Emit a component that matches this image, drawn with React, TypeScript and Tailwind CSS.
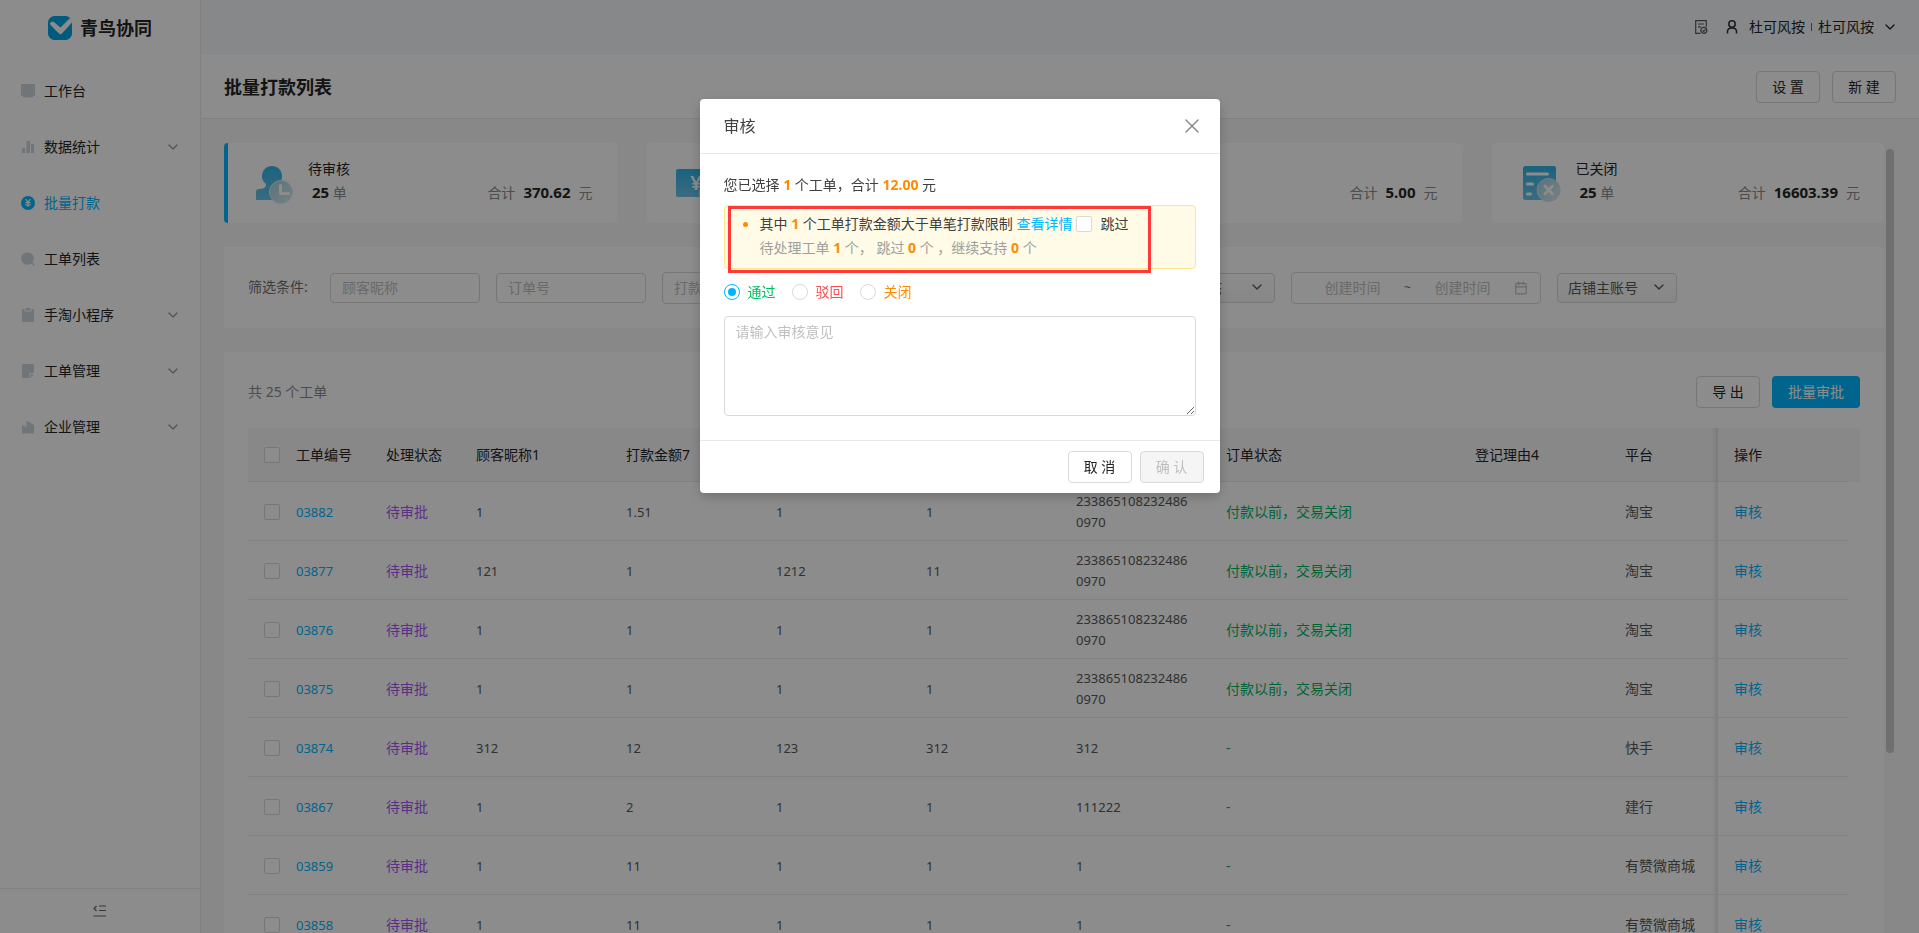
import React, { useState } from 'react';
import { Calendar, ChevronDown, X } from 'lucide-react';

const menu = [
  { name: '工作台', icon: 'desk', arrow: false },
  { name: '数据统计', icon: 'chart', arrow: true },
  { name: '批量打款', icon: 'pay', arrow: false },
  { name: '工单列表', icon: 'search', arrow: false },
  { name: '手淘小程序', icon: 'clip', arrow: true },
  { name: '工单管理', icon: 'note', arrow: true },
  { name: '企业管理', icon: 'company', arrow: true },
];

const stats = [
  { name: '待审核', icon: 'user', count: 25, total: '370.62' },
  { name: '待打款', icon: 'money', count: 3, total: '12.00' },
  { name: '已打款', icon: 'money', count: 2, total: '5.00' },
  { name: '已关闭', icon: 'closed', count: 25, total: '16603.39' },
];

const LONG_NO = '2338651082324860970';

const rows = [
  { id: '03882', cells: ['1', '1.51', '1', '1', LONG_NO], state: '付款以前，交易关闭', platform: '淘宝' },
  { id: '03877', cells: ['121', '1', '1212', '11', LONG_NO], state: '付款以前，交易关闭', platform: '淘宝' },
  { id: '03876', cells: ['1', '1', '1', '1', LONG_NO], state: '付款以前，交易关闭', platform: '淘宝' },
  { id: '03875', cells: ['1', '1', '1', '1', LONG_NO], state: '付款以前，交易关闭', platform: '淘宝' },
  { id: '03874', cells: ['312', '12', '123', '312', '312'], state: '-', platform: '快手' },
  { id: '03867', cells: ['1', '2', '1', '1', '111222'], state: '-', platform: '建行' },
  { id: '03859', cells: ['1', '11', '1', '1', '1'], state: '-', platform: '有赞微商城' },
  { id: '03858', cells: ['1', '11', '1', '1', '1'], state: '-', platform: '有赞微商城' },
];

const columns = ['工单编号', '处理状态', '顾客昵称1', '打款金额7', '支付宝姓名', '支付宝账号', '订单号', '订单状态', '登记理由4', '平台'];

const results = [
  { value: 'pass', name: '通过', color: 'text-[#00c060]' },
  { value: 'reject', name: '驳回', color: 'text-[#ff4d4f]' },
  { value: 'close', name: '关闭', color: 'text-[#ff8c00]' },
];

const btn = 'h-8 w-16 rounded border border-[#d9d9d9] bg-white text-[#262626] cursor-pointer';
const box = 'size-4 shrink-0 appearance-none rounded-xs border border-[#d9d9d9] bg-white block';
const field = 'rounded border border-[#d9d9d9] bg-white placeholder:text-[#bfbfbf] outline-none';
const fixedCol =
  'relative before:absolute before:inset-y-0 before:-left-1.5 before:w-1.5 before:bg-linear-to-l before:from-black/10 before:to-transparent';

function MenuIcon({ name }: { name: string }) {
  return (
    <svg width="14" height="14" viewBox="0 0 14 14" fill="#cbd5db">
      {name === 'desk' && (
        <>
          <rect width="14" height="12" rx="1" />
          <rect x="2" y="12" width="10" height="1.5" />
        </>
      )}
      {name === 'chart' && <path d="M1 8h3v5H1zM5.500 1h3.500v12H5.500zM10 4h3v9h-3z" />}
      {name === 'pay' && (
        <>
          <circle cx="7" cy="7" r="7" fill="#00b7ff" />
          <path d="M4.500 3L7 6.200 9.500 3M7 6v5M4.300 6.700h5.400M4.300 8.900h5.400" stroke="#fff" strokeWidth="1.200" fill="none" />
        </>
      )}
      {name === 'search' && (
        <>
          <circle cx="6.500" cy="6.500" r="6.300" />
          <path d="M10.500 10.500l3 3" stroke="#cbd5db" strokeWidth="1.500" />
        </>
      )}
      {name === 'clip' && <path d="M1 1h2.500v2.500h7V1H13v13H1zM4.500 0h5v2.500h-5z" />}
      {name === 'note' && <path d="M1 0h12v9H8.500v5H1zM9.500 10.200H13L9.500 13.700z" />}
      {name === 'company' && <path d="M1 5L5.500 7V.5L13 5v8.500H1z" />}
    </svg>
  );
}

function StatIcon({ name }: { name: string }) {
  return (
    <svg width="44" height="44" viewBox="0 0 44 44" className="shrink-0">
      <defs>
        <linearGradient id={`deep-${name}`} x1="0" y1="0" x2="0" y2="1">
          <stop offset="0" stopColor="#2db5e8" />
          <stop offset="1" stopColor="#6bc4ea" />
        </linearGradient>
        <linearGradient id={`soft-${name}`} x1="0" y1="0" x2="1" y2="1">
          <stop offset="0" stopColor="#9fd0e0" />
          <stop offset="1" stopColor="#dcecf0" />
        </linearGradient>
      </defs>
      {name === 'user' && (
        <>
          <path
            d="M20 5a10 10 0 0 1 6 18v4l4 1v11H4V31q0-3 3-3l4-.5q3-1 3-4.500A10 10 0 0 1 20 5z"
            fill="url(#deep-user)"
          />
          <circle cx="29" cy="31" r="11.500" fill="url(#soft-user)" stroke="#d6edf0" />
          <path d="M28.500 24.500v8h8" stroke="#fff" strokeWidth="3" strokeLinecap="round" strokeLinejoin="round" fill="none" />
        </>
      )}
      {name === 'money' && (
        <>
          <rect x="1" y="8" width="38" height="28" rx="2" fill="url(#deep-money)" />
          <text x="21" y="29" fontSize="20" fontWeight="600" fill="#fff" textAnchor="middle">¥</text>
          <circle cx="33" cy="32" r="9" fill="url(#soft-money)" stroke="#d6edf0" />
        </>
      )}
      {name === 'closed' && (
        <>
          <rect x="3" y="5" width="33" height="34" rx="2.500" fill="url(#deep-closed)" />
          <path d="M7.500 13h20M7.500 23h5M7.500 33h3" stroke="#fff" strokeWidth="3" strokeLinecap="round" />
          <circle cx="28.500" cy="29" r="11.500" fill="url(#soft-closed)" stroke="#c5e6f2" />
          <path d="M25 25l7.500 8M32.500 25L25 33" stroke="#fff" strokeWidth="3" strokeLinecap="round" />
        </>
      )}
    </svg>
  );
}

function Sidebar() {
  return (
    <aside className="relative z-10 flex w-50 shrink-0 flex-col bg-white shadow-[1px_0_0_#ebebeb]">
      <div className="mb-2 flex h-[55px] items-center gap-2 pl-12">
        <svg width="24" height="24" viewBox="0 0 24 24">
          <rect width="24" height="24" rx="6.500" fill="#00a6e6" />
          <path d="M2.500 6.500q2-1.500 4 0l6 5L22 2q2.500 1.500 2 4.500L14 17.500q-1.500 1.500-3 0L3 9.500Q1.500 8 2.500 6.500z" fill="#fff" />
        </svg>
        <span className="text-lg font-bold text-[#262626]">青鸟协同</span>
      </div>
      <nav className="flex-1">
        {menu.map((item) => (
          <a
            key={item.name}
            href="#"
            onClick={(e) => e.preventDefault()}
            className={
              'flex h-14 items-center gap-[9px] pr-[19px] pl-[21px] ' +
              (item.icon === 'pay' ? 'text-[#00b7ff]' : 'text-[#262626]')
            }
          >
            <MenuIcon name={item.icon} />
            <span className="flex-1">{item.name}</span>
            {item.arrow && <ChevronDown className="size-4 text-[#999]" />}
          </a>
        ))}
      </nav>
      <button aria-label="收起菜单" className="flex h-[45px] items-center justify-center border-t border-[#ebebeb] text-[#666]">
        <svg width="14" height="12" viewBox="0 0 14 12" fill="none" stroke="currentColor" strokeWidth="1.200">
          <path d="M6 1h7M6 5.500h7M.5 11H13M3.500 1L1 3.500 3.500 6" />
        </svg>
      </button>
    </aside>
  );
}

function TopBar() {
  return (
    <div className="flex h-[55px] shrink-0 items-center justify-end bg-[#f5f7fa] pr-[21px] pb-0.5 text-[#262626]">
      <svg width="13" height="14" viewBox="0 0 13 14" fill="none" stroke="#595959" strokeWidth="1.200">
        <path d="M5.500 13.300H.7V.7h10.600v6M3 4h6M3 6.800h3" />
        <circle cx="8.800" cy="10.300" r="3" />
        <path d="M7.500 10.500l1 1 2-2.200" />
      </svg>
      <svg width="12" height="14" viewBox="0 0 12 14" fill="none" stroke="#333" strokeWidth="1.500" className="ml-[18px]">
        <circle cx="6" cy="4" r="3.200" />
        <path d="M1.500 13.500v-2Q1.500 8 6 8t4.500 3.500v2" />
      </svg>
      <span className="ml-[11px]">杜可风按</span>
      <span className="mx-1.5 h-2 w-px bg-[#666]" />
      <span>杜可风按</span>
      <ChevronDown className="ml-2 size-4" />
    </div>
  );
}

function StatCard({ stat, active }: { stat: (typeof stats)[number]; active: boolean }) {
  return (
    <div className="relative flex h-20 flex-1 items-center gap-3 overflow-hidden rounded bg-white pr-6 pl-7">
      {active && <span className="absolute inset-y-0 left-0 w-1 bg-[#00b7ff]" />}
      <StatIcon name={stat.icon} />
      <div className="flex-1 pb-1.5">
        <p className="leading-6 text-[#262626]">{stat.name}</p>
        <div className="flex justify-between leading-[22px] text-[#8c8c8c]">
          <p className="pl-1">
            <b className="text-[15px] text-[#262626]">{stat.count}</b> 单
          </p>
          <p>
            合计<b className="mx-2 text-[15px] text-[#262626]">{stat.total}</b>元
          </p>
        </div>
      </div>
    </div>
  );
}

function Select({ label, className }: { label: string; className: string }) {
  return (
    <div className={'relative ' + className}>
      <select
        aria-label={label}
        className="h-[30px] w-full appearance-none rounded border border-[#d9d9d9] bg-linear-to-b from-white to-[#f5f5f5] px-[10px] text-[#595959] outline-none"
      >
        <option>{label}</option>
      </select>
      <ChevronDown className="pointer-events-none absolute top-1.5 right-[10px] size-4 text-[#595959]" />
    </div>
  );
}

function Filters() {
  return (
    <form className="mt-6 flex h-[81px] items-center gap-4 bg-white px-6">
      <span className="w-[66px] pb-0.5 text-[#737373]">筛选条件:</span>
      <input aria-label="顾客昵称" placeholder="顾客昵称" className={field + ' h-[30px] w-[150px] px-[11px]'} />
      <input aria-label="订单号" placeholder="订单号" className={field + ' h-[30px] w-[150px] px-[11px]'} />
      <input aria-label="打款金额" placeholder="打款金额" className={field + ' h-8 w-[250px] px-[11px]'} />
      <input aria-label="登记理由" placeholder="登记理由" className={field + ' h-[30px] w-[211px] px-[11px]'} />
      <Select label="订单状态" className="w-[120px]" />
      <div className="flex h-8 w-[250px] items-center rounded border border-[#d9d9d9] bg-white pr-3 pl-[9px] text-[#bfbfbf]">
        <input aria-label="开始时间" placeholder="创建时间" className="w-0 flex-1 text-center outline-none placeholder:text-[#bfbfbf]" />
        <span className="text-xs text-[#737373]">~</span>
        <input aria-label="结束时间" placeholder="创建时间" className="w-0 flex-1 text-center outline-none placeholder:text-[#bfbfbf]" />
        <Calendar className="size-[14px]" />
      </div>
      <Select label="店铺主账号" className="w-[120px]" />
    </form>
  );
}

function OrderTable() {
  return (
    <table className="mt-5 w-full table-fixed border-separate border-spacing-0 text-left">
      <colgroup>
        <col className="w-8" />
        <col className="w-[90px]" />
        <col className="w-[90px]" />
        <col className="w-[150px]" />
        <col className="w-[150px]" />
        <col className="w-[150px]" />
        <col className="w-[150px]" />
        <col className="w-[150px]" />
        <col />
        <col className="w-[150px]" />
        <col className="w-[109px]" />
        <col className="w-[130px]" />
        <col className="w-3" />
      </colgroup>
      <thead>
        <tr className="h-[54px] bg-[#f7f7f7] text-[#262626] [&>th]:font-normal">
          <th className="border-b border-[#e8e8e8] pl-4">
            <input type="checkbox" aria-label="全选" className={box} />
          </th>
          {columns.map((c) => (
            <th key={c} className="border-b border-[#e8e8e8] px-4">{c}</th>
          ))}
          <th className={'border-b border-[#e8e8e8] px-4 ' + fixedCol}>操作</th>
          <th />
        </tr>
      </thead>
      <tbody>
        {rows.map((r) => (
          <tr key={r.id} className="h-[59px] text-[#595959] [&>td]:pt-[9px] [&>td]:pb-[7px]">
            <td className="border-b border-[#ebebeb] pl-4">
              <input type="checkbox" aria-label={r.id} className={box} />
            </td>
            <td className="border-b border-[#ebebeb] px-4 text-[13px]">
              <a href="#" className="text-[#00b7ff]">{r.id}</a>
            </td>
            <td className="border-b border-[#ebebeb] px-4 text-[#a855f7]">待审批</td>
            {r.cells.map((c, i) => (
              <td key={i} className="border-b border-[#ebebeb] px-4 text-[13px] leading-[21px] break-all">{c}</td>
            ))}
            <td className="border-b border-[#ebebeb] px-4 text-[#00b860]">{r.state}</td>
            <td className="border-b border-[#ebebeb]" />
            <td className="border-b border-[#ebebeb] px-4 whitespace-nowrap">{r.platform}</td>
            <td className={'border-b border-[#ebebeb] px-4 ' + fixedCol}>
              <a href="#" className="text-[#00b7ff]">审核</a>
            </td>
            <td />
          </tr>
        ))}
      </tbody>
    </table>
  );
}

function AuditModal() {
  const [result, setResult] = useState('pass');

  return (
    <div className="fixed inset-0 z-20 flex items-start justify-center bg-black/45 pt-[99px]">
      <div role="dialog" aria-label="审核" className="w-[520px] rounded bg-white text-[#404040] shadow-[0_4px_12px_rgba(0,0,0,0.2)]">
        <div className="flex h-[55px] items-center justify-between border-b border-[#e8e8e8] pr-4 pl-6">
          <h2 className="text-base">审核</h2>
          <button aria-label="关闭" className="cursor-pointer text-[#8c8c8c]">
            <X className="size-6" strokeWidth={1.5} />
          </button>
        </div>

        <div className="px-6 pt-[19px] pb-6 leading-6">
          <p>
            您已选择 <b className="text-[#ff8c00]">1</b> 个工单，合计 <b className="text-[#ff8c00]">12.00</b> 元
          </p>

          <div className="relative mt-2 h-16 rounded border border-[#ffe58f] bg-[#fffbe6] pt-1.5 pl-[35px]">
            <span className="absolute top-4 left-[18px] size-[5px] rounded-full bg-[#ff8c00]" />
            <p className="flex items-center">
              <span>
                其中 <b className="text-[#ff8c00]">1</b> 个工单打款金额大于单笔打款限制{' '}
                <a href="#" className="text-[#00b7ff]">查看详情</a>
              </span>
              <label className="ml-1 flex items-center gap-2">
                <input type="checkbox" className={box} />
                跳过
              </label>
            </p>
            <p className="text-[#a0a0a0]">
              待处理工单 <b className="text-[#ff8c00]">1</b> 个， 跳过 <b className="text-[#ff8c00]">0</b> 个 ，继续支持{' '}
              <b className="text-[#ff8c00]">0</b> 个
            </p>
            {/* highlight frame */}
            <span className="pointer-events-none absolute top-0 left-[3px] h-[67px] w-[423px] border-3 border-[#ff3838]" />
          </div>

          <div className="mt-[11px] flex gap-4">
            {results.map((r) => (
              <label key={r.value} className={'flex items-center gap-2 ' + r.color}>
                <input
                  type="radio"
                  name="result"
                  checked={result === r.value}
                  onChange={() => setResult(r.value)}
                  className="grid size-4 appearance-none place-items-center rounded-full border border-[#d9d9d9] bg-white checked:border-[#00b7ff] checked:before:size-2 checked:before:rounded-full checked:before:bg-[#00b7ff]"
                />
                {r.name}
              </label>
            ))}
          </div>

          <textarea
            aria-label="审核意见"
            placeholder="请输入审核意见"
            className={field + ' mt-3 block h-[100px] w-full resize-y px-[11px] py-[3px]'}
          />
        </div>

        <div className="flex justify-end gap-2 border-t border-[#e8e8e8] px-4 py-[10px]">
          <button className={btn}>取 消</button>
          <button disabled className="h-8 w-16 rounded border border-[#d9d9d9] bg-[#f5f5f5] text-[#bfbfbf]">
            确 认
          </button>
        </div>
      </div>
    </div>
  );
}

export default function App() {
  return (
    <div className="flex h-screen overflow-hidden bg-[#f7f7f7] font-['Noto_Sans','Noto_Sans_CJK_SC',sans-serif] text-sm">
      <Sidebar />

      <main className="flex min-w-0 flex-1 flex-col">
        <TopBar />
        <div className="flex h-16 shrink-0 items-center gap-3 border-b border-[#ebebeb] bg-white pr-[23px] pl-6">
          <h1 className="flex-1 text-lg font-bold text-[#262626]">批量打款列表</h1>
          <button className={btn}>设 置</button>
          <button className={btn}>新 建</button>
        </div>

        <div className="flex min-h-0 flex-1 gap-0.5 pt-6 pr-[25px] pl-6">
          <div className="min-w-0 flex-1 overflow-hidden">
            <div className="flex gap-[30px]">
              {stats.map((s, i) => (
                <StatCard key={s.name} stat={s} active={i === 0} />
              ))}
            </div>
            <Filters />

            <div className="mt-6 bg-white px-6 pt-6">
              <div className="flex items-center gap-3">
                <span className="flex-1 text-[#8c8c8c]">共 25 个工单</span>
                <button className={btn}>导 出</button>
                <button className="h-8 cursor-pointer rounded bg-[#00b7ff] px-4 text-white">批量审批</button>
              </div>
              <OrderTable />
            </div>
          </div>
          {/* scroll thumb */}
          <div className="w-2 pt-1.5">
            <div className="h-[77%] rounded-full bg-[#cacaca]" />
          </div>
        </div>
      </main>

      <AuditModal />
    </div>
  );
}
